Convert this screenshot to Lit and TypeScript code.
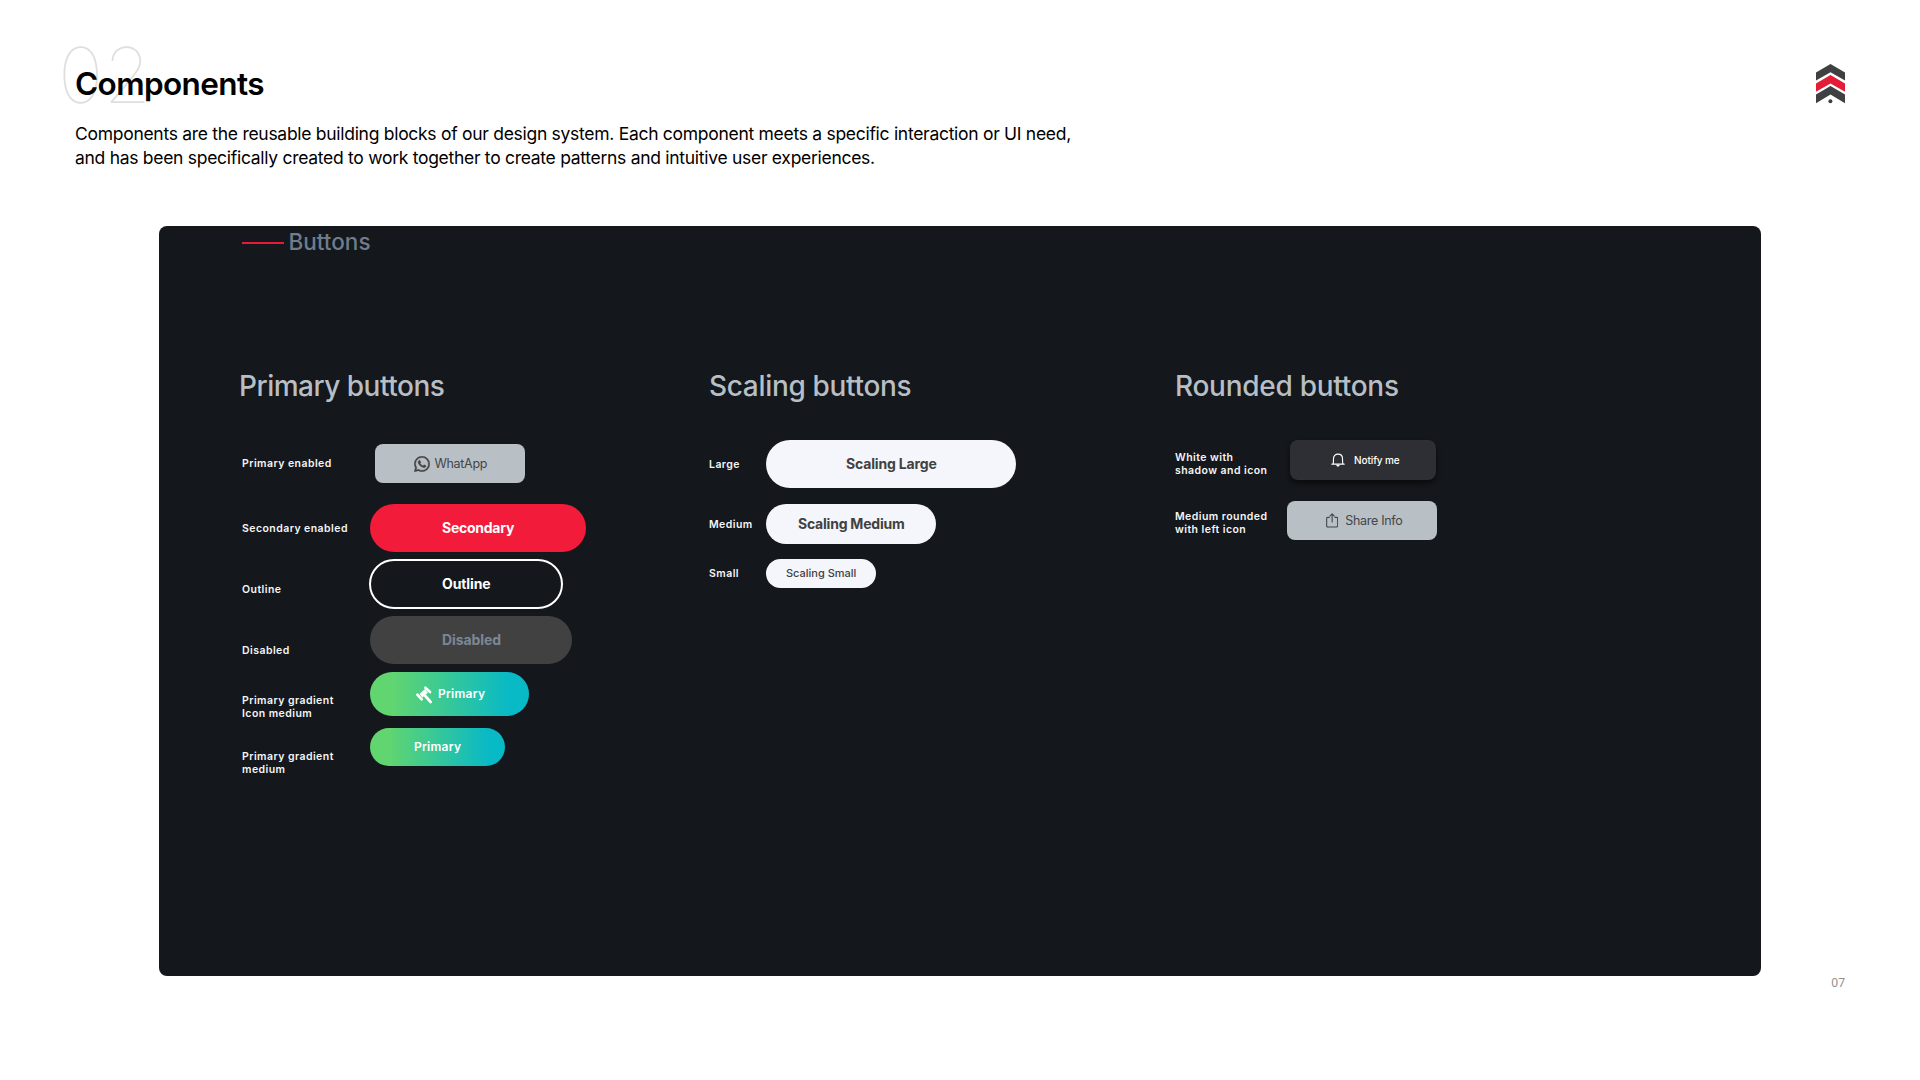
import { LitElement, html, css } from "lit";
import { customElement } from "lit/decorators.js";

const logo = html`<svg class="logo" viewBox="0 0 29 40" width="29" height="40">
  <path fill="#3f4041" d="M14.500 0 29 8.400v8L14.500 8.300 0 16.400v-8z" />
  <path fill="#e31c37" d="M14.500 11 29 19.500v8.200L14.500 19.500 0 27.700v-8.200z" />
  <path fill="#3f4041" d="M14.500 22 29 30.500v8.700L14.500 30.600 0 39.200v-8.700z" />
  <circle cx="14.400" cy="37.300" r="2" fill="#3f4041" />
</svg>`;

const whatsapp = html`<svg viewBox="-.4 -.4 24.8 24.8" width="16" height="16" fill="#414141" stroke="#414141" stroke-width=".7">
  <path d="M17.472 14.382c-.297-.149-1.758-.867-2.03-.967-.273-.099-.471-.148-.67.15-.197.297-.767.966-.94 1.164-.173.199-.347.223-.644.075-.297-.15-1.255-.463-2.39-1.475-.883-.788-1.48-1.761-1.653-2.059-.173-.297-.018-.458.13-.606.134-.133.298-.347.446-.52.149-.174.198-.298.298-.497.099-.198.05-.371-.025-.52-.075-.149-.669-1.612-.916-2.207-.242-.579-.487-.5-.669-.51-.173-.008-.371-.01-.57-.01-.198 0-.52.074-.792.372-.272.297-1.04 1.016-1.04 2.479 0 1.462 1.065 2.875 1.213 3.074.149.198 2.096 3.2 5.077 4.487.709.306 1.262.489 1.694.625.712.227 1.36.195 1.871.118.571-.085 1.758-.719 2.006-1.413.248-.694.248-1.289.173-1.413-.074-.124-.272-.198-.57-.347m-5.421 7.403h-.004a9.87 9.87 0 01-5.031-1.378l-.361-.214-3.741.982.998-3.648-.235-.374a9.86 9.86 0 01-1.51-5.26c.001-5.45 4.436-9.884 9.888-9.884 2.64 0 5.122 1.03 6.988 2.898a9.825 9.825 0 012.893 6.994c-.003 5.45-4.437 9.884-9.885 9.884m8.413-18.297A11.815 11.815 0 0012.05 0C5.495 0 .16 5.335.157 11.892c0 2.096.547 4.142 1.588 5.945L.057 24l6.305-1.654a11.882 11.882 0 005.683 1.448h.005c6.554 0 11.89-5.335 11.893-11.893a11.821 11.821 0 00-3.48-8.413z" />
</svg>`;

const gavel = html`<svg viewBox="0 0 54 57" width="18" height="19" fill="none" stroke="#fff" stroke-linecap="round">
  <path stroke-width="8" d="M31 8 45 21M7 29 20 43M31 33 47 51" />
  <path stroke-width="14" stroke-linecap="butt" d="M34 18 18 32" />
</svg>`;

const bell = html`<svg viewBox="0 0 42 42" width="14" height="14" fill="none" stroke="#fff" stroke-width="3.400" stroke-linecap="round" stroke-linejoin="round">
  <path d="M2.500 33.500H39.500M6.500 33C7.500 28 7.500 24 7.500 17 7.500 9 13 3.500 21 3.500S34.500 9 34.500 17C34.500 24 34.500 28 35.500 33" />
  <path fill="#fff" stroke="none" d="M14 35H28L21 42z" />
</svg>`;

const share = html`<svg viewBox="0 0 37 45" width="12.300" height="15" fill="none" stroke="#444648" stroke-width="3.300" stroke-linecap="round" stroke-linejoin="round">
  <path d="M10 13H4.500Q2 13 2 15.500V39Q2 42 5 42H32Q35 42 35 39V15.500Q35 13 32.500 13H27M18.500 27V3M12 9 18.500 2.500 25 9" />
</svg>`;

interface Sample { label: unknown; kind: string; text: string; icon?: unknown }
interface Group { title: string; kind: string; samples: Sample[] }

const groups: Group[] = [
  { title: "Primary buttons", kind: "primary", samples: [
    { label: "Primary enabled", kind: "whatsapp", text: "WhatApp", icon: whatsapp },
    { label: "Secondary enabled", kind: "secondary", text: "Secondary" },
    { label: "Outline", kind: "outline", text: "Outline" },
    { label: "Disabled", kind: "disabled", text: "Disabled" },
    { label: html`Primary gradient<br />Icon medium`, kind: "gradient-icon", text: "Primary", icon: gavel },
    { label: html`Primary gradient<br />medium`, kind: "gradient", text: "Primary" },
  ] },
  { title: "Scaling buttons", kind: "scaling", samples: [
    { label: "Large", kind: "large", text: "Scaling Large" },
    { label: "Medium", kind: "medium", text: "Scaling Medium" },
    { label: "Small", kind: "small", text: "Scaling Small" },
  ] },
  { title: "Rounded buttons", kind: "rounded", samples: [
    { label: html`White with<br />shadow and icon`, kind: "notify", text: "Notify me", icon: bell },
    { label: html`Medium rounded<br />with left icon`, kind: "share", text: "Share Info", icon: share },
  ] },
];

@customElement("app-root")
export class AppRoot extends LitElement {
  static styles = css`
    :host { display: block; width: 1920px; height: 1080px; background: #fff; color: #000; overflow: hidden;
      font-family: Inter, "Liberation Sans", sans-serif; position: relative; }
    * { box-sizing: border-box; }
    h1, h2, p { margin: 0; font-weight: 400; }
    header { display: flex; justify-content: space-between; height: 226px; padding: 64px 75px 0 75px; }
    .intro { position: relative; }
    .number { position: absolute; left: -17px; top: -27px; font-size: 77px; line-height: 76px; font-weight: 100; color: #dedede; }
    h1 { position: relative; font-size: 31.5px; line-height: 40px; font-weight: 600; letter-spacing: -0.6px; }
    .intro p { margin-top: 18px; font-size: 17.5px; line-height: 24px; letter-spacing: -0.286px; white-space: nowrap; }
    .logo { display: block; }
    .panel { width: 1602px; height: 750px; margin-left: 159px; border-radius: 8px; background: #14171b; padding-left: 80px; }
    .section { display: flex; align-items: center; height: 32px; padding-left: 3px; gap: 4.500px; color: #6f7c8b; font-size: 22.5px; line-height: 32px; font-weight: 500; }
    .rule { width: 42px; height: 2px; background: #e31c37; margin-top: 1px; }
    .groups { display: grid; grid-template-columns: 470px 466px 1fr; margin-top: 108px; }
    h2 { color: #b7bfc4; font-size: 28px; line-height: 40px; font-weight: 500; white-space: nowrap; }
    .t-primary { letter-spacing: -0.5px; }
    .t-scaling { letter-spacing: -0.33px; }
    .t-rounded { letter-spacing: -0.28px; }
    .primary .samples { padding-top: 38px; padding-left: 3px; }
    .scaling .samples, .rounded .samples { padding-top: 34px; }
    .row { display: flex; align-items: flex-start; }
    .label { width: 128px; flex: none; color: #f4f5f6; font-size: 10.5px; line-height: 13px; font-weight: 600; letter-spacing: 0.44px; white-space: nowrap; }
    .scaling .label { width: 57px; }
    .rounded .label { width: 115px; }
    .button { display: flex; align-items: center; font-family: inherit; border: 0; border-radius: 40px; padding: 0; margin: 0; color: #fff;
      font-size: 14px; line-height: 18px; font-weight: 650; letter-spacing: -0.16px; white-space: nowrap; }
    .button svg { flex: none; display: block; }

    .r-whatsapp { height: 60px; } .r-whatsapp .label { padding-top: 13px; }
    .r-secondary { height: 55px; } .r-secondary .label { padding-top: 18px; }
    .r-outline { height: 57px; } .r-outline .label { padding-top: 24px; }
    .r-disabled { height: 56px; } .r-disabled .label { padding-top: 28px; }
    .r-gradient-icon { height: 56px; } .r-gradient-icon .label, .r-gradient .label { padding-top: 22px; }
    .r-large { height: 64px; } .r-large .label { padding-top: 18px; }
    .r-medium { height: 55px; } .r-medium .label { padding-top: 14px; }
    .r-small .label { padding-top: 8px; }
    .r-notify { height: 61px; } .r-notify .label { padding-top: 11px; }
    .r-share .label { padding-top: 9px; }

    .whatsapp, .share { width: 150px; height: 39px; border-radius: 8px; background: #b8bfc5; color: #444648;
      font-weight: 400; font-size: 12.5px; letter-spacing: -0.3px; }
    .whatsapp { margin-left: 5px; padding-left: 38.500px; gap: 5px; }
    .share { padding-left: 38.500px; gap: 7.500px; margin-left: -3px; }
    .secondary { width: 216px; height: 48px; background: #f21b3a; padding-left: 72px; letter-spacing: -0.25px; }
    .outline { width: 194px; height: 50px; margin-left: -1px; border: 2px solid #fff; background: none; padding-left: 71px; letter-spacing: -0.1px; }
    .disabled { width: 202px; height: 48px; background: #414141; color: #7c8794; padding-left: 72px; letter-spacing: -0.08px; }
    .gradient-icon, .gradient { background: linear-gradient(90deg, #61d570 14%, #08b9c6 88%); font-size: 12px; font-weight: 600; letter-spacing: 0.25px; }
    .gradient-icon { width: 159px; height: 44px; padding-left: 45px; gap: 5px; }
    .gradient { width: 135px; height: 38px; padding-left: 44px; }
    .large, .medium, .small { background: #f5f6fb; color: #414141; }
    .large { width: 250px; height: 48px; padding-left: 80px; }
    .medium { width: 170px; height: 40px; padding-left: 32px; letter-spacing: -0.22px; }
    .small { width: 110px; height: 29px; padding: 0 0 1px 20px; font-size: 11px; font-weight: 550; letter-spacing: 0; }
    .notify { width: 146px; height: 40px; border-radius: 8px; background: #2d2f34; box-shadow: 0 3px 5px rgba(0, 0, 0, 0.55);
      padding-left: 41px; gap: 9px; font-size: 10px; font-weight: 500; letter-spacing: -0.1px; }

    .page { display: block; margin-top: -1px; text-align: right; padding: 0 75px 0 0; font: 400 12px/16px "Noto Sans", sans-serif; color: #8f8f8f; }
  `;

  render() {
    return html`
      <header>
        <div class="intro">
          <span class="number">02</span>
          <h1>Components</h1>
          <p>Components are the reusable building blocks of our design system. Each component meets a specific interaction or UI need,<br />and has been specifically created to work together to create patterns and intuitive user experiences.</p>
        </div>
        ${logo}
      </header>
      <main class="panel">
        <div class="section"><span class="rule"></span>Buttons</div>
        <div class="groups">
          ${groups.map((g) => html`<section class=${g.kind}>
            <h2 class="t-${g.kind}">${g.title}</h2>
            <div class="samples">
              ${g.samples.map((s) => html`<div class="row r-${s.kind}">
                <span class="label">${s.label}</span>
                <button class="button ${s.kind}">${s.icon ?? ""}<span>${s.text}</span></button>
              </div>`)}
            </div>
          </section>`)}
        </div>
      </main>
      <span class="page">07</span>
    `;
  }
}
